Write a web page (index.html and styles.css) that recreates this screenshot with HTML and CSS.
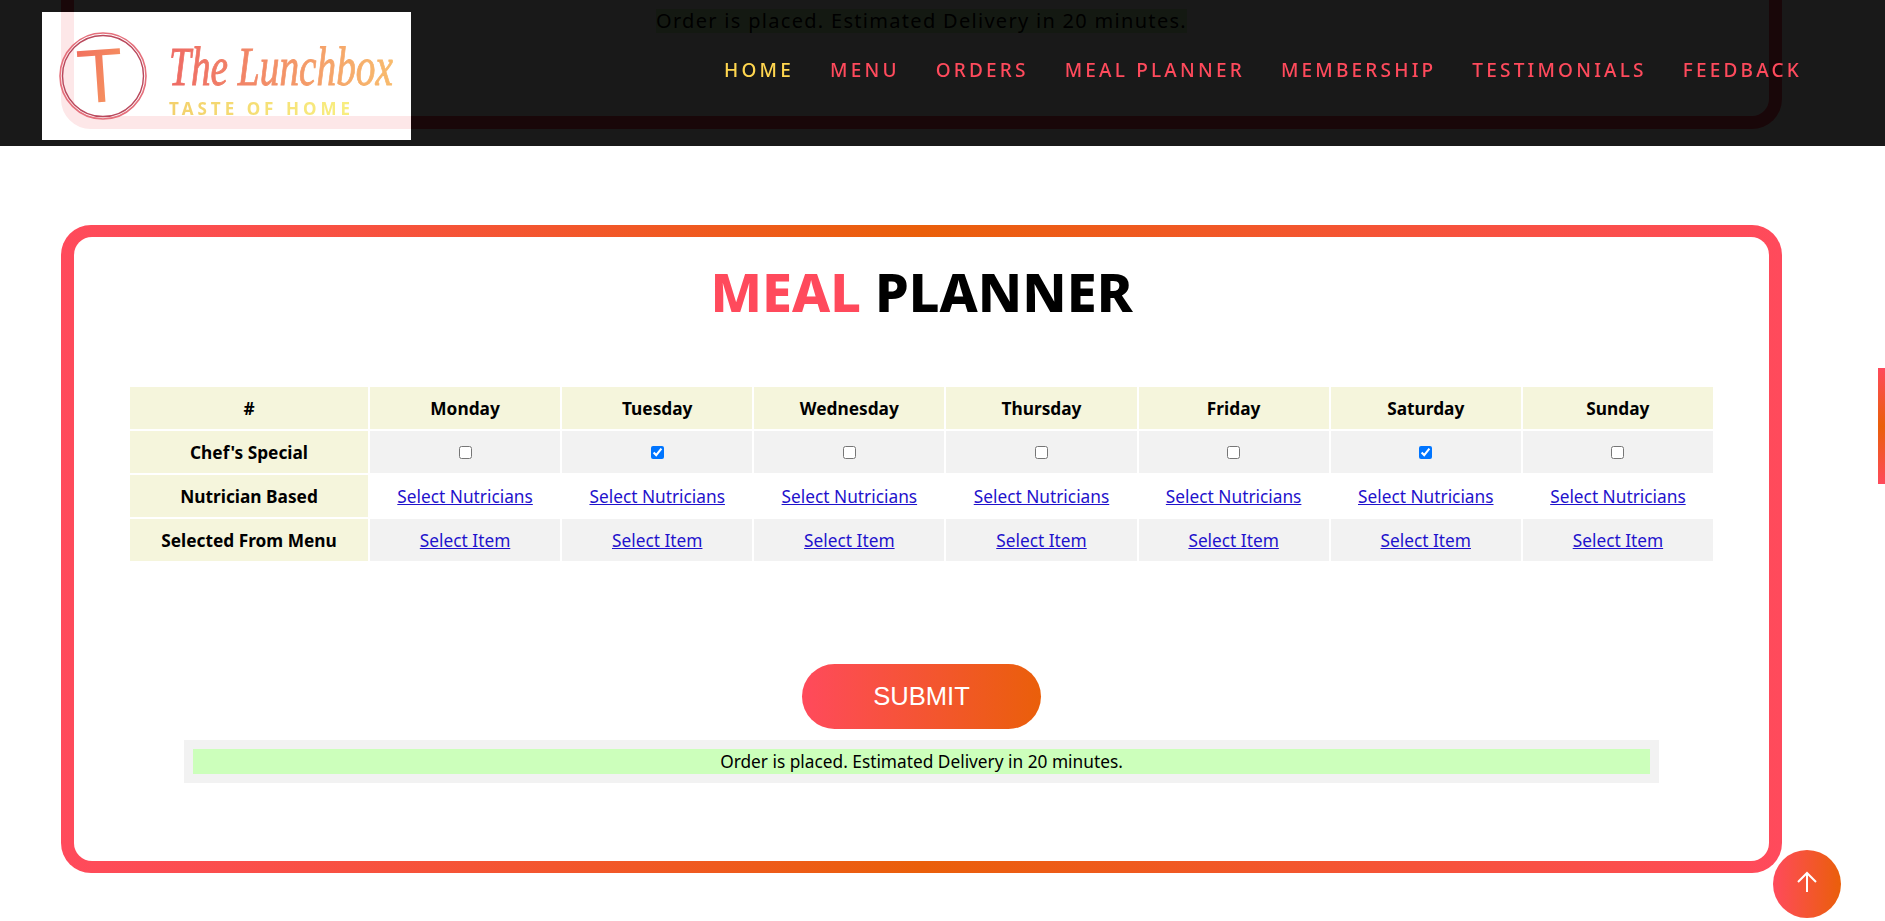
FILE: index.html
```html
<!DOCTYPE html>
<html lang="en">
<head>
    <meta charset="UTF-8">
    <meta name="viewport" content="width=device-width, initial-scale=1.0">
    <title>The Lunchbox - Meal Planner</title>
    <link rel="stylesheet" href="styles.css">
</head>
<body>

    <header class="header">
        <a class="logo" href="#">
            <span class="logo-clip"><span class="logo-ghost"></span></span>
            <svg class="logo-art" width="369" height="128" viewBox="0 0 369 128">
                <defs>
                    <linearGradient id="nameFill" x1="0" x2="1" y1="0" y2="0">
                        <stop offset="0" stop-color="#ee6a64"/>
                        <stop offset="1" stop-color="#f8bb6c"/>
                    </linearGradient>
                    <linearGradient id="tagFill" x1="0" x2="1" y1="0" y2="0">
                        <stop offset="0" stop-color="#f3d06c"/>
                        <stop offset="1" stop-color="#f8ee80"/>
                    </linearGradient>
                    <linearGradient id="markFill" x1="0" x2="1" y1="0" y2="1">
                        <stop offset="0" stop-color="#f06a5e"/>
                        <stop offset="1" stop-color="#f8a060"/>
                    </linearGradient>
                </defs>
                <circle cx="61" cy="64" r="43" fill="none" stroke="#e5707c" stroke-width="1.6"/>
                <circle cx="61" cy="64" r="40.5" fill="none" stroke="#b9485c" stroke-width="1.4"/>
                <text class="logo-t" x="58" y="90" text-anchor="middle" fill="url(#markFill)" transform="rotate(-4 58 64)">T</text>
                <text class="logo-name" fill="url(#nameFill)" stroke="url(#nameFill)" transform="translate(127 73) scale(1 1.3)" textLength="224" lengthAdjust="spacingAndGlyphs">The Lunchbox</text>
                <text class="logo-tag" x="127" y="103" fill="url(#tagFill)" textLength="181">TASTE OF HOME</text>
            </svg>
        </a>
        <nav class="nav">
            <a class="active" href="#">HOME</a>
            <a href="#">MENU</a>
            <a href="#">ORDERS</a>
            <a href="#">MEAL PLANNER</a>
            <a href="#">MEMBERSHIP</a>
            <a href="#">TESTIMONIALS</a>
            <a href="#">FEEDBACK</a>
        </nav>
    </header>

    <main>
        <div class="under-header">
            <div class="under-frame">
                <span class="under-msg">Order is placed. Estimated Delivery in 20 minutes.</span>
            </div>
        </div>

        <section class="planner">
            <div class="planner-inner">
                <h1><span>MEAL</span> PLANNER</h1>

                <table>
                    <tr class="head">
                        <th>#</th>
                        <th>Monday</th>
                        <th>Tuesday</th>
                        <th>Wednesday</th>
                        <th>Thursday</th>
                        <th>Friday</th>
                        <th>Saturday</th>
                        <th>Sunday</th>
                    </tr>
                    <tr class="grey">
                        <th>Chef's Special</th>
                        <td><input type="checkbox"></td>
                        <td><input type="checkbox" checked></td>
                        <td><input type="checkbox"></td>
                        <td><input type="checkbox"></td>
                        <td><input type="checkbox"></td>
                        <td><input type="checkbox" checked></td>
                        <td><input type="checkbox"></td>
                    </tr>
                    <tr>
                        <th>Nutrician Based</th>
                        <td><a href="#">Select Nutricians</a></td>
                        <td><a href="#">Select Nutricians</a></td>
                        <td><a href="#">Select Nutricians</a></td>
                        <td><a href="#">Select Nutricians</a></td>
                        <td><a href="#">Select Nutricians</a></td>
                        <td><a href="#">Select Nutricians</a></td>
                        <td><a href="#">Select Nutricians</a></td>
                    </tr>
                    <tr class="grey">
                        <th>Selected From Menu</th>
                        <td><a href="#">Select Item</a></td>
                        <td><a href="#">Select Item</a></td>
                        <td><a href="#">Select Item</a></td>
                        <td><a href="#">Select Item</a></td>
                        <td><a href="#">Select Item</a></td>
                        <td><a href="#">Select Item</a></td>
                        <td><a href="#">Select Item</a></td>
                    </tr>
                </table>

                <button class="submit">SUBMIT</button>

                <div class="message">
                    <p>Order is placed. Estimated Delivery in 20 minutes.</p>
                </div>
            </div>
        </section>
    </main>

    <a class="to-top" href="#">
        <svg width="24" height="24" viewBox="0 0 24 24" fill="none" stroke="#fff" stroke-width="2">
            <path d="M12 22V3M3 12l9-9 9 9"/>
        </svg>
    </a>
    <div class="scroll-mark"></div>

</body>
</html>
```

FILE: styles.css
```css
* {
    box-sizing: border-box;
}
body {
    margin: 0;
    font-family: "Noto Sans", Arial, sans-serif;
    background: #fff;
    color: #000;
    overflow: hidden;
}
.header {
    position: fixed;
    top: 0;
    left: 0;
    right: 0;
    height: 146px;
    padding: 12px 0 6px 42px;
    display: flex;
    align-items: flex-start;
    justify-content: space-between;
    background: rgba(0, 0, 0, 0.9);
    z-index: 10;
}
.logo {
    position: relative;
    display: block;
    width: 369px;
    height: 128px;
    background: #fff;
}
.logo-clip {
    position: absolute;
    inset: 0;
    overflow: hidden;
}
.logo-ghost {
    position: absolute;
    left: 19px;
    top: -100px;
    width: 500px;
    height: 217px;
    border: 13px solid #fde7e8;
    border-radius: 30px;
}
.logo-art {
    position: relative;
    display: block;
    overflow: visible;
}
.logo-t {
    font-family: "Liberation Sans", sans-serif;
    font-size: 76px;
}
.logo-name {
    font-family: "Liberation Serif", serif;
    font-size: 42px;
    font-style: italic;
    stroke-width: 0.7px;
}
.logo-tag {
    font-family: "Noto Sans", sans-serif;
    font-size: 17px;
    font-weight: 700;
}
.nav {
    display: flex;
    gap: 36px;
    margin: 46px 83px 0 0;
}
.nav a {
    color: #ff4a5c;
    font-size: 19px;
    font-weight: 500;
    letter-spacing: 3.2px;
    line-height: 24px;
    text-decoration: none;
}
.nav a.active {
    color: #ffd64f;
}
.under-header {
    height: 146px;
    padding: 0 103px 0 61px;
    overflow: hidden;
}
.under-frame {
    height: 129px;
    padding-top: 9px;
    background: #fff;
    border: 13px solid #ff4a5c;
    border-top: 0;
    border-radius: 0 0 30px 30px;
    text-align: center;
}
.under-msg {
    background: #ccffbb;
    font-size: 20px;
    letter-spacing: 1.3px;
    line-height: 24px;
    display: inline-block;
}
.planner {
    margin: 79px 103px 0 61px;
    padding: 12px 13px;
    height: 648px;
    border-radius: 30px;
    background: linear-gradient(90deg, #ff4a5c 0%, #ea5f0a 50%, #ff4a5c 100%);
}
.planner-inner {
    height: 100%;
    padding: 19px 54px 0;
    background: #fff;
    border-radius: 18px;
    display: flex;
    flex-direction: column;
    align-items: center;
}
h1 {
    margin: 0;
    font-size: 54px;
    font-weight: 800;
    line-height: 70px;
}
h1 span {
    color: #ff4a5c;
}
table {
    width: 100%;
    margin-top: 59px;
    border-spacing: 2px;
    table-layout: fixed;
    font-size: 17.3px;
}
th, td {
    height: 42px;
    padding: 0;
    text-align: center;
}
th:first-child {
    width: 238px;
}
th {
    background: #f5f5dc;
    font-weight: 700;
}
.grey td {
    background: #f2f2f2;
}
td a {
    color: #1f12cc;
}
td input {
    margin: 0 0 4px;
}
.submit {
    width: 239px;
    height: 65px;
    margin-top: 101px;
    border: 0;
    border-radius: 33px;
    background: linear-gradient(90deg, #ff4a5c, #ea5f0a);
    color: #fff;
    font-family: "Liberation Sans", Arial, sans-serif;
    font-size: 25.6px;
}
.message {
    width: 1475px;
    margin-top: 11px;
    padding: 9px;
    background: #f2f2f2;
}
.message p {
    margin: 0;
    background: #ccffbb;
    font-size: 17.3px;
    line-height: 25px;
    text-align: center;
}
.to-top {
    position: fixed;
    right: 44px;
    bottom: 3px;
    width: 68px;
    height: 68px;
    padding-bottom: 5px;
    border-radius: 50%;
    background: linear-gradient(90deg, #ff4a5c, #ea5f0a);
    display: flex;
    align-items: center;
    justify-content: center;
}
.scroll-mark {
    position: fixed;
    top: 368px;
    right: 0;
    width: 7px;
    height: 116px;
    background: linear-gradient(180deg, #ff4a5c, #ea5f0a 50%, #ff4a5c);
}
```
